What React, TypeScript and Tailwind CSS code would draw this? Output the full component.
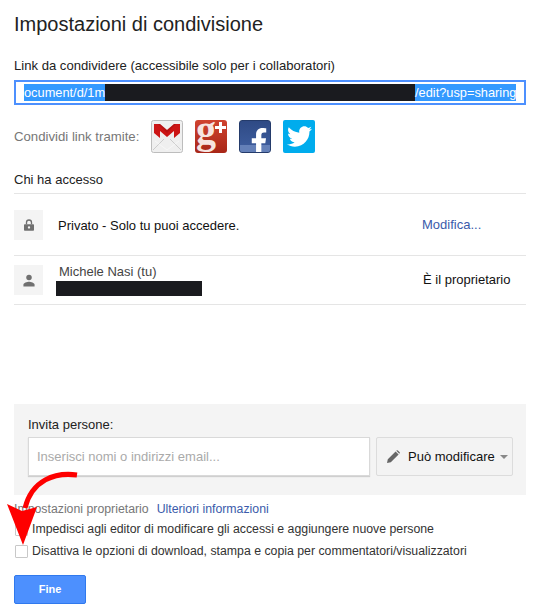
import { FaFacebookF, FaTwitter } from 'react-icons/fa';

function GmailIcon() {
  return (
    <svg className="w-8 h-[33px]" viewBox="0 0 32 33">
      <rect x="0.5" y="0.5" width="31" height="32" rx="2" fill="#efefef" stroke="#bdbdbd" />
      <path d="M2 30 L13 19 M30 30 L19 19" stroke="#cccccc" strokeWidth="1" fill="none" />
      <path d="M4 21 L16 30 L28 21" fill="none" stroke="#f8f8f8" strokeWidth="1" />
      <path d="M3 4 H9 L16 10 L23 4 H29 V13 L23 18 V11 L16 17 L9 11 V18 L3 13 Z" fill="#cc1414" />
      <path d="M9 4 L16 10 L23 4 H25 L16 13 L7 4 Z" fill="#8e0b0b" opacity="0.35" />
    </svg>
  );
}

function GoogleIcon() {
  return (
    <div className="relative w-8 h-[33px] rounded-[3px] bg-gradient-to-b from-[#d0432f] to-[#a82617]">
      <span className="absolute left-[1px] top-0 text-[40px] leading-[19px] font-bold text-[#f6e4e0] font-['Liberation_Serif',serif]">g</span>
      <div className="absolute left-[20px] top-[6px] w-[11px] h-[3px] bg-white" />
      <div className="absolute left-[24px] top-[2px] w-[3px] h-[11px] bg-white" />
    </div>
  );
}

function FacebookIcon() {
  return (
    <div className="w-8 h-[33px] rounded-[3px] bg-gradient-to-b from-[#2f4a85] to-[#3f5fa0] border border-[#243b6b] relative overflow-hidden flex flex-col">
      <div className="flex-1" />
      <div className="h-[7px] bg-[#6480b8]" />
      <FaFacebookF className="absolute right-[1px] bottom-[-3px] w-[20px] h-[27px] text-white" />
    </div>
  );
}

function TwitterIcon() {
  return (
    <div className="w-8 h-[33px] rounded-[2px] bg-[#00aced] flex items-center justify-center">
      <FaTwitter className="w-[25px] h-[25px] text-white" />
    </div>
  );
}

function LockIcon() {
  return (
    <svg className="w-2.5 h-3" viewBox="0 0 12 14" fill="#707070">
      <path d="M1 6h10a1 1 0 0 1 1 1v6a1 1 0 0 1-1 1H1a1 1 0 0 1-1-1V7a1 1 0 0 1 1-1z" />
      <path d="M3 6V4a3 3 0 0 1 6 0v2" fill="none" stroke="#707070" strokeWidth="1.6" />
      <circle cx="6" cy="10" r="1.4" fill="#f4f4f4" />
    </svg>
  );
}

function PersonIcon() {
  return (
    <svg className="w-3 h-[13px]" viewBox="0 0 14 14" fill="#707070">
      <circle cx="7" cy="3.5" r="3.2" />
      <path d="M0.5 14v-2c0-2.2 4.2-3.4 6.5-3.4s6.5 1.2 6.5 3.4v2z" />
    </svg>
  );
}

function Arrow() {
  return (
    <svg className="absolute left-0 top-[470px] w-[90px] h-[80px]" viewBox="0 0 90 80">
      <path d="M77 5 C55 2 32 10 25 38" fill="none" stroke="#fe0000" strokeWidth="5" />
      <path d="M7 34 L22 41 L37 37 L23 75 Z" fill="#fe0000" />
    </svg>
  );
}

export default function App() {
  return (
    <div className="relative w-[542px] h-[612px] bg-white px-[14px] text-[13px] text-[#111] font-['Liberation_Sans',Arial,sans-serif] overflow-hidden">
      <h1 className="pt-[12px] text-[20px] leading-[24px] text-[#222]">Impostazioni di condivisione</h1>

      <div className="mt-[22px] text-[13.1px] leading-[16px] text-[#222]">Link da condividere (accessibile solo per i collaboratori)</div>
      <div className="mt-[6px] w-[512px] h-[25px] border-2 border-[#4d90fe] pl-[8px] flex items-center">
        <div className="flex items-center h-[17px] bg-[#3399ff] text-white text-[12.8px] leading-[17px] whitespace-nowrap">
          <span className="w-[81px]">ocument/d/1m</span>
          <div className="w-[310px] h-[17px] bg-[#1a1b1f]" />
          <span>/edit?usp=sharing</span>
        </div>
      </div>

      <div className="mt-[15px] flex items-center h-[33px]">
        <span className="w-[137px] text-[13.2px] text-[#777]">Condividi link tramite:</span>
        <div className="flex gap-3">
          <GmailIcon />
          <GoogleIcon />
          <FacebookIcon />
          <TwitterIcon />
        </div>
      </div>

      <div className="mt-[19px] h-[20px] leading-[16px] text-[#222]">Chi ha accesso</div>
      <div className="mt-[1px] w-[512px] border-t border-[#e5e5e5]">
        <div className="h-[62px] flex items-center border-b border-[#e5e5e5]">
          <div className="w-[29px] h-[30px] bg-[#f4f4f4] flex items-center justify-center">
            <LockIcon />
          </div>
          <span className="ml-[15px] flex-1 translate-y-[1px]">Privato - Solo tu puoi accedere.</span>
          <span className="w-[104px] text-[#3b5bab]">Modifica...</span>
        </div>
        <div className="h-[49px] flex items-center border-b border-[#e5e5e5]">
          <div className="w-[29px] h-[30px] bg-[#f4f4f4] flex items-center justify-center">
            <PersonIcon />
          </div>
          <div className="flex-1 ml-[13px]">
            <div className="ml-[3px] mb-[2px] leading-[15px] text-[#444]">Michele Nasi (tu)</div>
            <div className="w-[146px] h-[15px] bg-[#1a1b1f]" />
          </div>
          <span className="w-[104px] translate-x-[1px]">È il proprietario</span>
        </div>
      </div>

      <div className="mt-[99px] w-[512px] h-[91px] bg-[#f4f4f4] px-[14px] pt-[13px]">
        <div className="leading-[16px] text-[#222]">Invita persone:</div>
        <div className="mt-[4px] flex gap-[6px]">
          <div className="w-[342px] shrink-0 h-[39px] bg-white border border-[#d9d9d9] shadow-[0_1px_1px_rgba(0,0,0,0.15)] px-[8px] flex items-center text-[#aaa]">
            Inserisci nomi o indirizzi email...
          </div>
          <div className="w-[137px] shrink-0 h-[39px] bg-[#f3f3f3] border border-[#dcdcdc] rounded-[2px] flex items-center pl-[10px]">
            <svg className="w-[13px] h-[13px]" viewBox="0 0 13 13" fill="#666">
              <path d="M0 13 L0.8 9.2 L8.6 1.4 L11.6 4.4 L3.8 12.2 Z M9.5 0.5 Q10.2 -0.2 10.9 0.5 L12.5 2.1 Q13.2 2.8 12.5 3.5 L12.3 3.7 L9.3 0.7 Z" />
            </svg>
            <span className="ml-[8px]">Può modificare</span>
            <span className="ml-[5px] w-0 h-0 border-x-[4px] border-x-transparent border-t-[4px] border-t-[#888]" />
          </div>
        </div>
      </div>

      <div className="mt-[6px] h-[16px] leading-[16px] flex gap-2 text-[12.3px]">
        <span className="text-[#777]">Impostazioni proprietario</span>
        <span className="text-[#3b5bab]">Ulteriori informazioni</span>
      </div>
      <label className="mt-[4px] h-[16px] flex items-center gap-[4px] text-[12.3px] text-[#333]">
        <span className="ml-[1px] w-[13px] h-[13px] border border-[#c8c8c8] rounded-[1px] bg-white" />
        Impedisci agli editor di modificare gli accessi e aggiungere nuove persone
      </label>
      <label className="mt-[6px] h-[16px] flex items-center gap-[4px] text-[12.3px] text-[#333]">
        <span className="ml-[1px] w-[13px] h-[13px] border border-[#c8c8c8] rounded-[1px] bg-white" />
        Disattiva le opzioni di download, stampa e copia per commentatori/visualizzatori
      </label>

      <button className="mt-[16px] block w-[72px] h-[29px] rounded-[2px] border border-[#3079ed] bg-[#4d90fe] text-white text-[11px] font-bold">
        Fine
      </button>

      <Arrow />
    </div>
  );
}
